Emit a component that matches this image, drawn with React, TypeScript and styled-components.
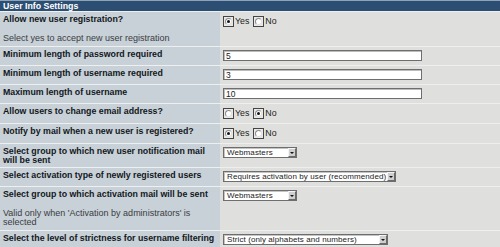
import React from 'react';
import styled, { createGlobalStyle } from 'styled-components';

const GlobalStyle = createGlobalStyle`
  html, body {
    margin: 0;
    padding: 0;
    background: #dfe0de;
  }
  body {
    font-family: "Liberation Sans", Arial, sans-serif;
  }
`;

const Panel = styled.div`
  width: 500px;
  height: 247px;
  overflow: hidden;
  background: #dfe0de;
`;

const Header = styled.div`
  height: 10px;
  border-top: 1px solid #8ea3b9;
  background: #2c4e73;
  color: #ffffff;
  font-weight: bold;
  font-size: 8.8px;
  line-height: 10px;
  padding-left: 3px;
`;

const Row = styled.div`
  display: grid;
  grid-template-columns: 220px 1fr;
  border-top: 1px solid #eef0ef;
`;

const LabelCell = styled.div`
  background: #c8d0d8;
  padding: 3px 3px 2px;
`;

const Title = styled.div`
  font-size: 8.8px;
  font-weight: bold;
  line-height: 9px;
  color: #121820;
  white-space: nowrap;
`;

const Description = styled.div`
  margin-top: 10px;
  padding-bottom: 1px;
  font-size: 9px;
  line-height: 9px;
  color: #3a3d40;
`;

const ControlCell = styled.div`
  background: #dfe0de;
  padding: 3px 3px 4px;
  display: flex;
  align-items: flex-start;
`;

const TextBox = styled.input`
  box-sizing: border-box;
  width: 199px;
  height: 11px;
  margin: 0;
  padding: 0 2px;
  border: 1px solid #6e6e6e;
  box-shadow: inset 1px 1px 0 #bdbdbd;
  background: #ffffff;
  font-family: "Liberation Sans", Arial, sans-serif;
  font-size: 8.5px;
  line-height: 9px;
  color: #222;
  outline: none;
`;

const SelectBox = styled.div<{ $width: number }>`
  box-sizing: border-box;
  width: ${p => p.$width}px;
  height: 11px;
  border: 1px solid #6e6e6e;
  box-shadow: inset 1px 1px 0 #c4c4c4;
  background: #ffffff;
  display: flex;
  align-items: center;
  justify-content: space-between;
  padding-left: 3px;
  font-size: 8px;
  letter-spacing: 0.1px;
  color: #222;
  white-space: nowrap;
  overflow: hidden;
`;

const ArrowButton = styled.span`
  box-sizing: border-box;
  flex: none;
  width: 8px;
  height: 9px;
  background: #cfcfcf;
  border-left: 1px solid #f4f4f4;
  border-top: 1px solid #f4f4f4;
  border-right: 1px solid #6a6a6a;
  border-bottom: 1px solid #6a6a6a;
  display: flex;
  align-items: center;
  justify-content: center;

  &::after {
    content: '';
    border-left: 2px solid transparent;
    border-right: 2px solid transparent;
    border-top: 2px solid #111;
  }
`;

const RadioGroup = styled.div`
  display: flex;
  align-items: center;
  height: 12px;
  font-size: 8.8px;
  color: #222;
`;

const RadioFrame = styled.span`
  box-sizing: border-box;
  width: 11px;
  height: 11px;
  border: 1px solid #444;
  background: #e8e8e8;
  display: flex;
  align-items: center;
  justify-content: center;
`;

const RadioDot = styled.span<{ $checked: boolean }>`
  box-sizing: border-box;
  width: 7px;
  height: 7px;
  border-radius: 50%;
  border: 1px solid #8a8a8a;
  border-right-color: #e0e0e0;
  border-bottom-color: #e0e0e0;
  background: #ffffff;
  display: flex;
  align-items: center;
  justify-content: center;

  &::after {
    content: '';
    width: 3px;
    height: 3px;
    border-radius: 50%;
    background: ${p => (p.$checked ? '#111' : 'transparent')};
  }
`;

const OptionText = styled.span`
  margin: 0 4px 0 1px;
`;

type YesNoProps = { value: boolean };

const YesNo: React.FC<YesNoProps> = ({ value }) => (
  <RadioGroup>
    <RadioFrame><RadioDot $checked={value} /></RadioFrame>
    <OptionText>Yes</OptionText>
    <RadioFrame><RadioDot $checked={!value} /></RadioFrame>
    <OptionText>No</OptionText>
  </RadioGroup>
);

const Select: React.FC<{ text: string; width: number }> = ({ text, width }) => (
  <SelectBox $width={width}>
    <span>{text}</span>
    <ArrowButton />
  </SelectBox>
);

type Setting = {
  title: React.ReactNode;
  description?: React.ReactNode;
  control: React.ReactNode;
};

const settings: Setting[] = [
  {
    title: 'Allow new user registration?',
    description: 'Select yes to accept new user registration',
    control: <YesNo value={true} />,
  },
  { title: 'Minimum length of password required', control: <TextBox defaultValue="5" readOnly /> },
  { title: 'Minimum length of username required', control: <TextBox defaultValue="3" readOnly /> },
  { title: 'Maximum length of username', control: <TextBox defaultValue="10" readOnly /> },
  { title: 'Allow users to change email address?', control: <YesNo value={false} /> },
  { title: 'Notify by mail when a new user is registered?', control: <YesNo value={true} /> },
  {
    title: (
      <>
        Select group to which new user notification mail
        <br />
        will be sent
      </>
    ),
    control: <Select text="Webmasters" width={74} />,
  },
  {
    title: 'Select activation type of newly registered users',
    control: <Select text="Requires activation by user (recommended)" width={173} />,
  },
  {
    title: 'Select group to which activation mail will be sent',
    description: (
      <>
        Valid only when 'Activation by administrators' is
        <br />
        selected
      </>
    ),
    control: <Select text="Webmasters" width={74} />,
  },
  {
    title: 'Select the level of strictness for username filtering',
    control: <Select text="Strict (only alphabets and numbers)" width={165} />,
  },
];

const App: React.FC = () => (
  <>
    <GlobalStyle />
    <Panel>
      <Header>User Info Settings</Header>
      {settings.map((s, i) => (
        <Row key={i}>
          <LabelCell>
            <Title>{s.title}</Title>
            {s.description && <Description>{s.description}</Description>}
          </LabelCell>
          <ControlCell>{s.control}</ControlCell>
        </Row>
      ))}
    </Panel>
  </>
);

export default App;
